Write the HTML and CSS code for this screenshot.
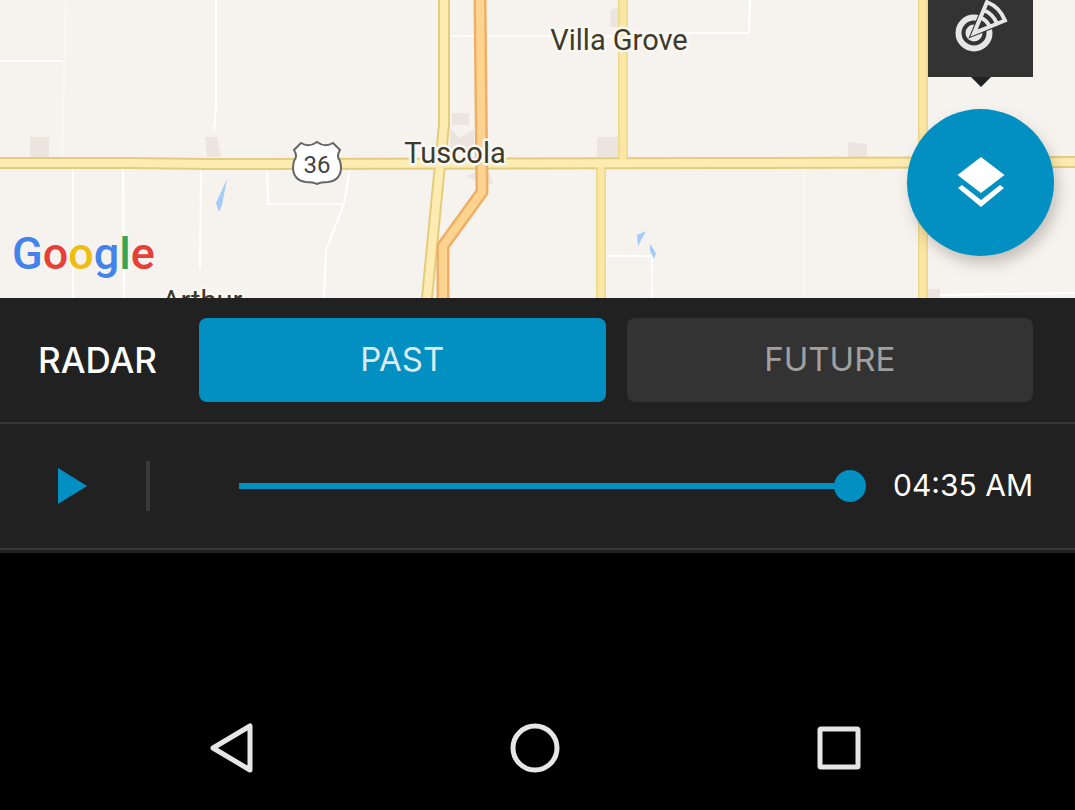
FILE: index.html
```html
<!DOCTYPE html>
<html lang="en">
<head>
<meta charset="utf-8">
<meta name="viewport" content="width=device-width, initial-scale=1">
<title>Radar</title>
<link rel="stylesheet" href="styles.css">
</head>
<body>
<main class="map">
  <svg class="map-canvas" viewBox="0 0 1075 298" preserveAspectRatio="xMidYMid slice" role="img" aria-label="Map around Tuscola">
    <g class="town">
      <path d="M30 137h19v20H30zM205 137h12l4 20h-14zM452 113h17v12h-17zM450 128l10 10 14-9v20h-24zM466 176l22-8 5 16h-14l-6-5zM597 137h21v20h-21zM611 10l8-3v20h-9zM848 142l19 2v13h-19zM928 289h12v9h-12z"/>
    </g>
    <g class="lane">
      <path d="M0 61h62"/>
      <path d="M216 0v108l-2 22M73 169v129M123 169l1 129M201 169l-1 100M267 169l1 35h76M350 169l-6 35-18 46-2 48M450 36h168M628 33h121l1-33M606 256h46v42M940 295l135-2"/>
      <path class="faint" d="M66 0l-4 157M804 169v129"/>
    </g>
    <g class="water">
      <path d="M227 179l-11 24 3 9 3-7zM646 231l-9 4 1 11zM650 244l6 9-2 6-4-8z"/>
    </g>
    <g class="road">
      <path class="edge soft" d="M623 0v163M601 165v133M923 0v298"/>
      <path class="edge" d="M0 163h130l80 1 510-1 355-1M444 0v125l-4 39-13 134"/>
      <path class="fill soft" d="M623 0v163M601 165v133M923 0v298"/>
      <path class="fill" d="M0 163h130l80 1 510-1 355-1M444 0v125l-4 39-13 134"/>
      <path class="edge major" d="M480 0l1 100 1 92-39 54v52"/>
      <path class="fill major" d="M480 0l1 100 1 92-39 54v52"/>
    </g>
    <g class="shield">
      <path d="M301 143q8 5 16-1 8 6 16 1l7 7q-4 6 0 11c3 11-1 20-12 21q-7 0-11 2-4-2-11-2c-11-1-15-10-12-21q4-5 0-11z"/>
      <text x="317" y="173">36</text>
    </g>
    <g class="place">
      <text x="619" y="50">Villa Grove</text>
      <text x="455" y="163">Tuscola</text>
      <text x="202" y="311">Arthur</text>
    </g>
  </svg>
  <div class="brand" aria-label="Google"><span class="blue">G</span><span class="red">o</span><span class="yellow">o</span><span class="blue">g</span><span class="green">l</span><span class="red">e</span></div>
  <div class="layers">
    <button class="layer-option" type="button" aria-label="Radar layer">
      <svg viewBox="0 0 54 54" width="54" height="54" aria-hidden="true">
        <circle class="ring" cx="20" cy="35" r="15.500"/>
        <circle class="core" cx="20" cy="35" r="5.500"/>
        <path class="gap" d="M20 35L33 4A33 33 0 0 1 50 23z"/>
        <path class="beam" d="M20 35L33 4A33 33 0 0 1 51 22.500zM29.500 12A25 25 0 0 1 43 25.500M26.500 19.500A17 17 0 0 1 35.500 28.500"/>
      </svg>
    </button>
    <button class="fab" type="button" aria-label="Map layers">
      <svg viewBox="0 0 48 52" width="48" height="52" aria-hidden="true">
        <path d="M24 0l23.500 18L24 36 .5 18zM1 31l4-3 19 15 19-15 4 3-23 19z"/>
      </svg>
    </button>
  </div>
</main>
<section class="panel">
  <div class="row">
    <h1 class="title">RADAR</h1>
    <div class="modes">
      <button class="mode active" type="button" aria-pressed="true">PAST</button>
      <button class="mode" type="button" aria-pressed="false">FUTURE</button>
    </div>
  </div>
  <div class="row player">
    <button class="play" type="button" aria-label="Play">
      <svg viewBox="0 0 30 36" width="30" height="36" aria-hidden="true"><path d="M0 0l29 18L0 36z"/></svg>
    </button>
    <span class="divider"></span>
    <input class="timeline" id="timeline" type="range" min="0" max="100" value="100" aria-label="Radar time">
    <output class="time" for="timeline">04:35 AM</output>
  </div>
</section>
<nav class="system">
  <button type="button" aria-label="Back"><svg viewBox="0 0 52 52" width="52" height="52" aria-hidden="true"><path d="M44 4v44L7 26z"/></svg></button>
  <button type="button" aria-label="Home"><svg viewBox="0 0 52 52" width="52" height="52" aria-hidden="true"><circle cx="26" cy="26" r="22"/></svg></button>
  <button type="button" aria-label="Recent apps"><svg viewBox="0 0 52 52" width="52" height="52" aria-hidden="true"><rect x="7" y="7" width="38" height="38" rx="1"/></svg></button>
</nav>
</body>
</html>
```
FILE: styles.css
```css
* { box-sizing: border-box; }
body {
  margin: 0;
  min-height: 100vh;
  display: flex;
  flex-direction: column;
  background: #000;
  color: #fff;
  font-family: "Inter", "Noto Sans", sans-serif;
}
button {
  margin: 0;
  padding: 0;
  border: 0;
  background: none;
  color: inherit;
  font: inherit;
  cursor: pointer;
}
svg { display: block; }

.map {
  position: relative;
  flex: 1;
  min-height: 240px;
  overflow: hidden;
  background: #f6f3ee;
}
.map-canvas {
  position: absolute;
  inset: 0;
  width: 100%;
  height: 100%;
}
.town { fill: #ece4de; }
.water { fill: #a4cbfa; }
.lane { fill: none; stroke: #fff; stroke-width: 2; }
.lane .faint { stroke: #faf8f5; }
.road { fill: none; stroke-linejoin: round; }
.edge { stroke: #e3cd7c; stroke-width: 12; }
.fill { stroke: #fdecb2; stroke-width: 8; }
.edge.soft { stroke: #ecd88c; stroke-width: 10; }
.fill.soft { stroke: #fbe7a3; stroke-width: 7; }
.edge.major { stroke: #edb067; stroke-width: 13; }
.fill.major { stroke: #fcd38f; stroke-width: 8; }
.shield path { fill: #fff; stroke: #666; stroke-width: 2; }
.shield text {
  fill: #444;
  font: 24px "Roboto", sans-serif;
  text-anchor: middle;
}
.place {
  fill: #3f3a28;
  stroke: #faf8f4;
  stroke-width: 5;
  stroke-linejoin: round;
  paint-order: stroke;
  font: 29px "Roboto", sans-serif;
  text-anchor: middle;
}
.brand {
  position: absolute;
  left: 12px;
  bottom: 16px;
  font: 500 45px/56px "Roboto", sans-serif;
}
.blue { color: #4583ec; }
.red { color: #e64138; }
.yellow { color: #edbd10; }
.green { color: #36a655; }

.layers {
  position: absolute;
  right: 21px;
  bottom: 42px;
  display: flex;
  flex-direction: column;
  align-items: center;
  gap: 32px;
}
.layer-option {
  position: relative;
  display: grid;
  place-items: center;
  width: 105px;
  height: 105px;
  background: #333;
}
.layer-option::after {
  content: "";
  position: absolute;
  top: 100%;
  border: 10px solid transparent;
  border-top-color: #222;
  border-bottom: 0;
}
.ring, .core, .beam { fill: none; stroke: #e6e6e6; }
.ring { stroke-width: 6; }
.core { stroke-width: 6; }
.gap { fill: #333; stroke: #333; stroke-width: 6; }
.beam { stroke-width: 4; }
.fab {
  display: grid;
  place-items: center;
  width: 147px;
  height: 147px;
  border-radius: 50%;
  background: #028fc1;
  box-shadow: 4px 8px 14px rgba(60, 40, 30, .25);
}
.fab svg { fill: #fff; }

.panel {
  padding-bottom: 3px;
  background: #212121;
}
.row {
  display: flex;
  align-items: center;
  padding: 20px 42px 20px 38px;
  border-bottom: 2px solid #363636;
}
.title {
  flex: none;
  width: 161px;
  margin: 0;
  font-size: 35px;
  font-weight: 500;
  line-height: 40px;
}
.modes {
  flex: 1;
  display: grid;
  grid-template-columns: 1fr 1fr;
  gap: 21px;
}
.mode {
  height: 84px;
  padding-bottom: 2px;
  border-radius: 8px;
  background: #333;
  color: #a0a0a0;
  font-size: 33px;
}
.mode.active {
  background: #028fc1;
  color: #dce9ef;
}
.player { min-height: 126px; }
.play { padding: 0 20px; }
.play svg { fill: #028fc1; }
.divider {
  flex: none;
  width: 4px;
  height: 50px;
  margin: 0 89px 0 38px;
  background: #3a3a3a;
}
.timeline {
  flex: 1;
  min-width: 60px;
  height: 32px;
  margin: 0 27px 0 0;
  background: none;
  appearance: none;
}
.timeline::-webkit-slider-runnable-track {
  height: 6px;
  background: linear-gradient(to right, #028fc1 calc(100% - 16px), transparent 0);
}
.timeline::-webkit-slider-thumb {
  appearance: none;
  width: 32px;
  height: 32px;
  margin-top: -13px;
  border-radius: 50%;
  background: #028fc1;
}
.time {
  flex: none;
  padding-bottom: 2px;
  font-size: 30px;
}
.system {
  display: grid;
  grid-template-columns: repeat(3, 1fr);
  place-items: center;
  padding: 169px 84px 36px 80px;
}
.system svg {
  fill: none;
  stroke: #e6e6e6;
  stroke-width: 5;
  stroke-linejoin: round;
}
```
